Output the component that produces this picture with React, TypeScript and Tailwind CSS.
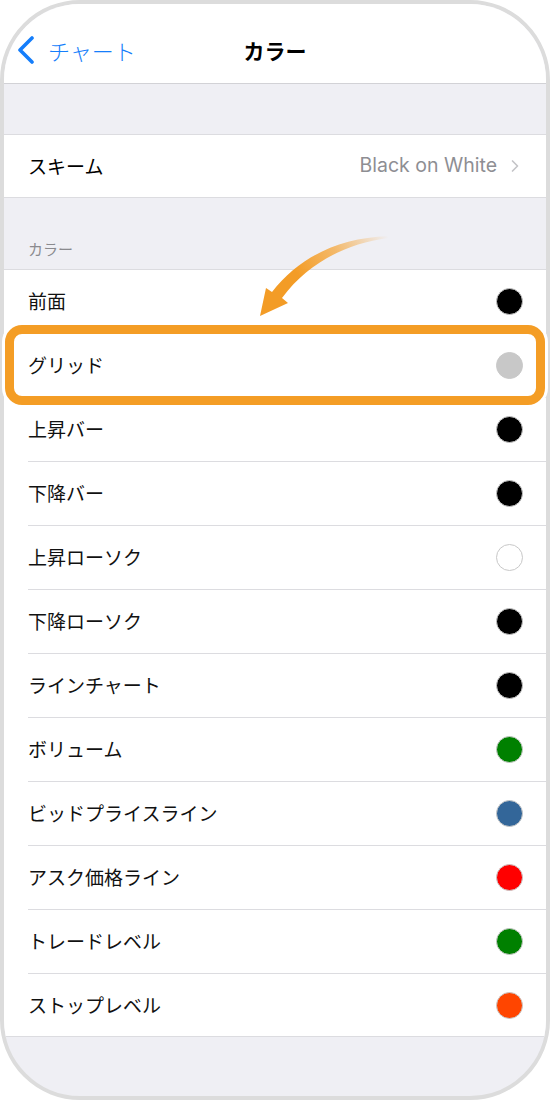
import { ChevronRight } from 'lucide-react';

const colors = [
  { label: '前面', color: 'bg-black' },
  { label: 'グリッド', color: 'bg-[#c8c8c8]' },
  { label: '上昇バー', color: 'bg-black' },
  { label: '下降バー', color: 'bg-black' },
  { label: '上昇ローソク', color: 'bg-white' },
  { label: '下降ローソク', color: 'bg-black' },
  { label: 'ラインチャート', color: 'bg-black' },
  { label: 'ボリューム', color: 'bg-[#008000]' },
  { label: 'ビッドプライスライン', color: 'bg-[#336699]' },
  { label: 'アスク価格ライン', color: 'bg-[#ff0000]' },
  { label: 'トレードレベル', color: 'bg-[#008000]' },
  { label: 'ストップレベル', color: 'bg-[#ff4500]' },
];

function Arrow() {
  return (
    <svg className="absolute left-0 top-0 pointer-events-none" width="550" height="400" viewBox="0 0 550 400">
      <defs>
        <linearGradient id="arrowFade" gradientUnits="userSpaceOnUse" x1="388" y1="236" x2="300" y2="280">
          <stop offset="0" stopColor="#f5a63a" stopOpacity="0" />
          <stop offset="0.55" stopColor="#f5a63a" stopOpacity="0.75" />
          <stop offset="1" stopColor="#f39c26" />
        </linearGradient>
      </defs>
      <path
        d="M388 236 C 340 238 300 256 272 292 L 266 288 L 260 316 L 288 303 L 282 298 C 308 263 345 244 388 238 Z"
        fill="url(#arrowFade)"
      />
    </svg>
  );
}

export default function App() {
  return (
    <div className="relative w-[550px] h-[1100px] font-['Noto_Sans_CJK_JP',sans-serif]">
      <div className="w-full h-full border-4 border-[#dcdcdc] rounded-[80px] overflow-hidden bg-[#efeff4] flex flex-col">
        {/* Nav bar */}
        <div className="h-[80px] shrink-0 bg-white border-b border-[#d2d2d6] pt-[13px] grid grid-cols-[1fr_auto_1fr] items-center">
          <div className="flex items-center pl-[13px] text-[#157efb]">
            <svg width="18" height="28" viewBox="0 0 18 28" fill="none">
              <polyline points="15,2 3,14 15,26" stroke="#157efb" strokeWidth="3.6" strokeLinecap="round" strokeLinejoin="round" />
            </svg>
            <span className="ml-[13px] text-[22px] leading-[28px] font-light">チャート</span>
          </div>
          <div className="text-[21px] leading-[28px] font-bold text-black">カラー</div>
          <div />
        </div>

        <div className="h-[50px] shrink-0" />

        {/* Scheme */}
        <div className="h-[64px] shrink-0 bg-white border-y border-[#dcdce0] flex items-center justify-between pl-[24px] pr-[21px]">
          <span className="text-[19px] text-black">スキーム</span>
          <div className="flex items-center gap-[8px]">
            <span className="font-['Inter',sans-serif] text-[19.5px] text-[#8e8e93]">Black on White</span>
            <ChevronRight className="w-[20px] h-[20px] text-[#c4c4c7]" strokeWidth={2} />
          </div>
        </div>

        {/* Section header */}
        <div className="h-[71px] shrink-0 flex items-end pl-[24px] pb-[10px]">
          <span className="text-[15px] leading-[20px] text-[#8a8a8e]">カラー</span>
        </div>

        {/* Color list */}
        <div className="shrink-0 bg-white border-y border-[#dcdce0]">
          {colors.map((c, i) => {
            const last = i === colors.length - 1;
            return (
              <div key={c.label} className="pl-[24px]">
                <div
                  className={`flex items-center justify-between pr-[23px] ${
                    last ? 'h-[62px]' : 'h-[64px] border-b border-[#dcdce0]'
                  }`}
                >
                  <span className="text-[19px] text-[#111]">{c.label}</span>
                  <span className={`w-[27px] h-[27px] rounded-full border border-[#c8c8c8] ${c.color}`} />
                </div>
              </div>
            );
          })}
        </div>
      </div>

      {/* Highlight annotation */}
      <div className="absolute left-[5px] top-[325px] w-[540px] h-[80px] rounded-[17px] border-[9px] border-[#f49d25] ring-[3px] ring-white" />
      <Arrow />
    </div>
  );
}
